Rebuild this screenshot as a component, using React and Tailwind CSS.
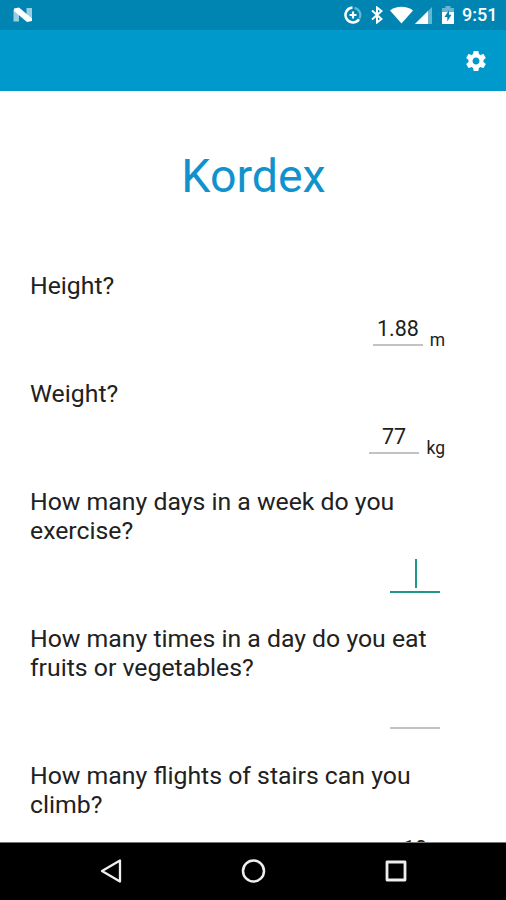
const questions = [
  { text: ['Height?'], value: '1.88', unit: 'm', unitClass: 'w-[22px]' },
  { text: ['Weight?'], value: '77', unit: 'kg', unitClass: 'w-[26px]' },
  { text: ['How many days in a week do you', 'exercise?'], focused: true },
  { text: ['How many times in a day do you eat', 'fruits or vegetables?'] },
  { text: ['How many flights of stairs can you', 'climb?'], value: '10' },
];

const StatusBar = () => (
  <div className="flex h-[30px] shrink-0 items-center bg-[#0085b3] pl-[13px] text-white">
    <svg width="20" height="16" viewBox="0 0 20 16" fill="currentColor">
      <path d="M0.5 2.5 L6 7 V14.5 H0.5 Z M13.5 1 H19 V13 L13.5 9 Z" opacity="0.6" />
      <path d="M1 1.5 L6 0.5 L19 11.5 V14 L14 15 L1 4 Z" />
    </svg>
    <div className="ml-auto flex items-center">
      {/* data saver */}
      <svg width="18" height="18" viewBox="0 0 18 18" fill="none" stroke="currentColor">
        <path d="M8.5 1.6 A7.4 7.4 0 1 0 15 13.2" strokeWidth="2.5" />
        <path d="M10.5 1.8 A7.4 7.4 0 0 1 15.4 12.5" strokeWidth="2.3" opacity="0.4" />
        <path d="M9 5.5 V12.5 M5.5 9 H12.5" strokeWidth="2.2" />
      </svg>
      <svg className="ml-[9px]" width="12" height="18" viewBox="0 0 12 18" fill="none" stroke="currentColor" strokeWidth="2">
        <path d="M1 4.5 L10.5 13 L6 16.5 V1.5 L10.5 5 L1 13.5" />
      </svg>
      <svg className="ml-[7px]" width="23" height="18" viewBox="0 0 23 18" fill="currentColor">
        <path d="M0 4.5 C6 -0.5 17 -0.5 23 4.5 L11.5 17.5 Z" />
      </svg>
      <svg className="ml-[2px]" width="17" height="17" viewBox="0 0 17 17" fill="currentColor">
        <path d="M17 0 V17 H0 Z" opacity="0.4" />
        <path d="M13 4 V17 H0 Z" />
      </svg>
      <svg className="ml-[10px]" width="12" height="18" viewBox="0 0 12 18" fill="currentColor">
        <path d="M3.5 0 H8.5 V2 H12 V6 H0 V2 H3.5 Z" opacity="0.4" />
        <path d="M0 6 H12 V18 H0 Z" />
        <path d="M7 4 L2.5 11 H5.3 V15.5 L9.5 8.8 H7 Z" fill="#0085b3" />
      </svg>
      <span className="ml-[8px] w-[44px] text-[18px] leading-[30px] font-medium">9:51</span>
    </div>
  </div>
);

const AppBar = () => (
  <div className="flex h-[61px] shrink-0 items-center justify-end bg-[#0099cc] pr-[18px]">
    <svg width="24" height="24" viewBox="0 0 24 24" fill="white">
      <path d="M19.43 12.98c.04-.32.07-.64.07-.98s-.03-.66-.07-.98l2.11-1.65c.19-.15.24-.42.12-.64l-2-3.46c-.12-.22-.39-.3-.61-.22l-2.49 1c-.52-.4-1.08-.73-1.69-.98l-.38-2.65C14.46 2.18 14.25 2 14 2h-4c-.25 0-.46.18-.49.42l-.38 2.65c-.61.25-1.17.59-1.69.98l-2.49-1c-.23-.09-.49 0-.61.22l-2 3.46c-.13.22-.07.49.12.64l2.11 1.65c-.04.32-.07.65-.07.98s.03.66.07.98l-2.11 1.65c-.19.15-.24.42-.12.64l2 3.46c.12.22.39.3.61.22l2.49-1c.52.4 1.08.73 1.69.98l.38 2.65c.03.24.24.42.49.42h4c.25 0 .46-.18.49-.42l.38-2.65c.61-.25 1.17-.59 1.69-.98l2.49 1c.23.09.49 0 .61-.22l2-3.46c.12-.22.07-.49-.12-.64l-2.11-1.65zM12 15.5c-1.93 0-3.5-1.57-3.5-3.5s1.57-3.5 3.5-3.5 3.5 1.57 3.5 3.5-1.57 3.5-3.5 3.5z" />
    </svg>
  </div>
);

const Question = ({ text, value, unit, unitClass, focused }) => (
  <div>
    <div className="text-[24.8px] leading-[29px] text-[#212121]">
      {text.map((line) => (
        <div key={line} className="whitespace-nowrap">{line}</div>
      ))}
    </div>
    <div className="flex h-[79.2px] justify-end pt-[11.6px] pr-[66px]">
      <div
        className={
          focused
            ? 'flex h-[36px] w-[50px] justify-center border-b-2 border-[#1f9688] pt-[2px] pl-[2px]'
            : 'h-[35px] w-[50px] border-b-2 border-[#c2c2c2] pt-[4px] text-center text-[21.5px] leading-[27px] text-[#212121]'
        }
      >
        {focused ? <span className="h-[29px] w-[2px] bg-[#1f9688]" /> : value}
      </div>
      {unit ? (
        <span className={`${unitClass} -mr-[5px] pt-[18px] text-right text-[17.5px] leading-[22px] text-[#212121]`}>{unit}</span>
      ) : null}
    </div>
  </div>
);

const NavBar = () => (
  <div className="flex h-[58px] shrink-0 items-center justify-between border-t border-[#777] bg-black pr-[99px] pb-[2px] pl-[99px] text-[#eee]">
    <svg width="24" height="26" viewBox="0 0 24 26" fill="none" stroke="currentColor" strokeWidth="2.3" strokeLinejoin="round">
      <path d="M21 2.5 V23.5 L3 13 Z" />
    </svg>
    <svg width="26" height="26" viewBox="0 0 26 26" fill="none" stroke="currentColor" strokeWidth="2.5">
      <circle cx="12.5" cy="13" r="10.5" />
    </svg>
    <svg width="22" height="22" viewBox="0 0 22 22" fill="none" stroke="currentColor" strokeWidth="2.8" strokeLinejoin="round">
      <path d="M2 2 H20 V20 H2 Z" />
    </svg>
  </div>
);

export default function App() {
  return (
    <div className="flex h-[900px] w-[506px] flex-col overflow-hidden bg-white font-['Roboto',sans-serif]">
      <StatusBar />
      <AppBar />
      <div className="min-h-0 flex-1 overflow-hidden pl-[30px]">
        <h1 className="mt-[57px] mr-[29px] mb-[66.6px] text-center text-[46.5px] leading-[56px] text-[#1192cc]">Kordex</h1>
        {questions.map((q) => (
          <Question key={q.text[0]} {...q} />
        ))}
      </div>
      <NavBar />
    </div>
  );
}
